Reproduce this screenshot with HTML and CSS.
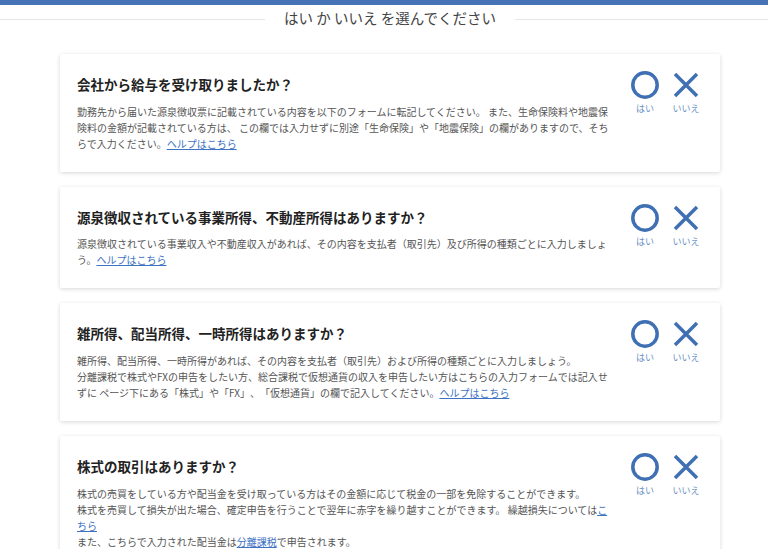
FILE: index.html
```html
<!DOCTYPE html>
<html lang="ja">
<head>
<meta charset="utf-8">
<title>はい か いいえ を選んでください</title>
<link rel="stylesheet" href="styles.css">
</head>
<body>
<div class="topbar"></div>
<div class="heading">
  <span class="heading-line heading-line-left"></span>
  <span class="heading-text">はい か いいえ を選んでください</span>
  <span class="heading-line heading-line-right"></span>
</div>
<main class="list">
  <section class="card">
    <div class="card-body">
      <h2 class="card-title">会社から給与を受け取りましたか？</h2>
      <p class="card-desc">勤務先から届いた源泉徴収票に記載されている内容を以下のフォームに転記してください。 また、生命保険料や地震保険料の金額が記載されている方は、 この欄では入力せずに別途「生命保険」や「地震保険」の欄がありますので、そちらで入力ください。<a href="#" class="link">ヘルプはこちら</a></p>
    </div>
    <div class="answers">
      <button class="answer"><svg class="icon" viewBox="0 0 28 28"><circle cx="14" cy="14" r="12.2" /></svg><span class="answer-label">はい</span></button>
      <button class="answer"><svg class="icon" viewBox="0 0 28 28"><path d="M3 3 L25 25 M25 3 L3 25" /></svg><span class="answer-label">いいえ</span></button>
    </div>
  </section>
  <section class="card">
    <div class="card-body">
      <h2 class="card-title">源泉徴収されている事業所得、不動産所得はありますか？</h2>
      <p class="card-desc">源泉徴収されている事業収入や不動産収入があれば、その内容を支払者（取引先）及び所得の種類ごとに入力しましょう。<a href="#" class="link">ヘルプはこちら</a></p>
    </div>
    <div class="answers">
      <button class="answer"><svg class="icon" viewBox="0 0 28 28"><circle cx="14" cy="14" r="12.2" /></svg><span class="answer-label">はい</span></button>
      <button class="answer"><svg class="icon" viewBox="0 0 28 28"><path d="M3 3 L25 25 M25 3 L3 25" /></svg><span class="answer-label">いいえ</span></button>
    </div>
  </section>
  <section class="card">
    <div class="card-body">
      <h2 class="card-title">雑所得、配当所得、一時所得はありますか？</h2>
      <p class="card-desc">雑所得、配当所得、一時所得があれば、その内容を支払者（取引先）および所得の種類ごとに入力しましょう。<br>分離課税で株式やFXの申告をしたい方、総合課税で仮想通貨の収入を申告したい方はこちらの入力フォームでは記入せずに ページ下にある「株式」や「FX」、「仮想通貨」の欄で記入してください。<a href="#" class="link">ヘルプはこちら</a></p>
    </div>
    <div class="answers">
      <button class="answer"><svg class="icon" viewBox="0 0 28 28"><circle cx="14" cy="14" r="12.2" /></svg><span class="answer-label">はい</span></button>
      <button class="answer"><svg class="icon" viewBox="0 0 28 28"><path d="M3 3 L25 25 M25 3 L3 25" /></svg><span class="answer-label">いいえ</span></button>
    </div>
  </section>
  <section class="card">
    <div class="card-body">
      <h2 class="card-title">株式の取引はありますか？</h2>
      <p class="card-desc">株式の売買をしている方や配当金を受け取っている方はその金額に応じて税金の一部を免除することができます。<br>株式を売買して損失が出た場合、確定申告を行うことで翌年に赤字を繰り越すことができます。 繰越損失については<a href="#" class="link">こちら</a><br>また、こちらで入力された配当金は<a href="#" class="link">分離課税</a>で申告されます。</p>
    </div>
    <div class="answers">
      <button class="answer"><svg class="icon" viewBox="0 0 28 28"><circle cx="14" cy="14" r="12.2" /></svg><span class="answer-label">はい</span></button>
      <button class="answer"><svg class="icon" viewBox="0 0 28 28"><path d="M3 3 L25 25 M25 3 L3 25" /></svg><span class="answer-label">いいえ</span></button>
    </div>
  </section>
</main>
</body>
</html>
```
FILE: styles.css
```css
* { box-sizing: border-box; }
html, body {
  margin: 0;
  padding: 0;
  background: #ffffff;
  font-family: "Noto Sans CJK JP", "Noto Sans", sans-serif;
  color: #333;
  text-spacing-trim: space-all;
}
.topbar {
  height: 5px;
  background: #4573b5;
}
.heading {
  display: flex;
  align-items: center;
  padding-top: 2px;
}
.heading-line {
  height: 1px;
  background: #e6e6e6;
  margin-top: 3px;
}
.heading-line-left { flex: 0 0 265px; }
.heading-line-right { flex: 1 1 auto; }
.heading-text {
  font-size: 14.5px;
  line-height: 21px;
  color: #444;
  padding: 0 19px;
  white-space: nowrap;
}
.list {
  margin: 26px 0 0 60px;
  width: 660px;
  display: flex;
  flex-direction: column;
  gap: 15px;
}
.card {
  display: flex;
  background: #fff;
  border-radius: 2px;
  box-shadow: 0 1px 4px rgba(0, 0, 0, 0.16);
  padding: 0 17px 20px 17px;
}
.card-body {
  width: 535px;
  flex: 0 0 535px;
  padding-top: 20px;
}
.card-title {
  margin: 0;
  font-size: 13.5px;
  line-height: 20px;
  font-weight: 700;
  color: #222;
}
.card-desc {
  margin: 9.7px 0 0 0;
  font-size: 10px;
  line-height: 16px;
  color: #555;
}
.link {
  color: #3d72c2;
  text-decoration: underline;
}
.answers {
  display: flex;
  gap: 5px;
  margin-left: 15px;
  padding-top: 17px;
}
.answer {
  width: 36px;
  display: flex;
  flex-direction: column;
  align-items: center;
  background: none;
  border: 0;
  padding: 0;
  margin: 0;
  cursor: pointer;
  font-family: inherit;
}
.icon {
  width: 28px;
  height: 28px;
  display: block;
  fill: none;
  stroke: #3f70b3;
  stroke-width: 3.5;
}
.answer-label {
  margin-top: 4px;
  font-size: 9px;
  line-height: 12px;
  color: #6a8fc4;
  white-space: nowrap;
}
```
